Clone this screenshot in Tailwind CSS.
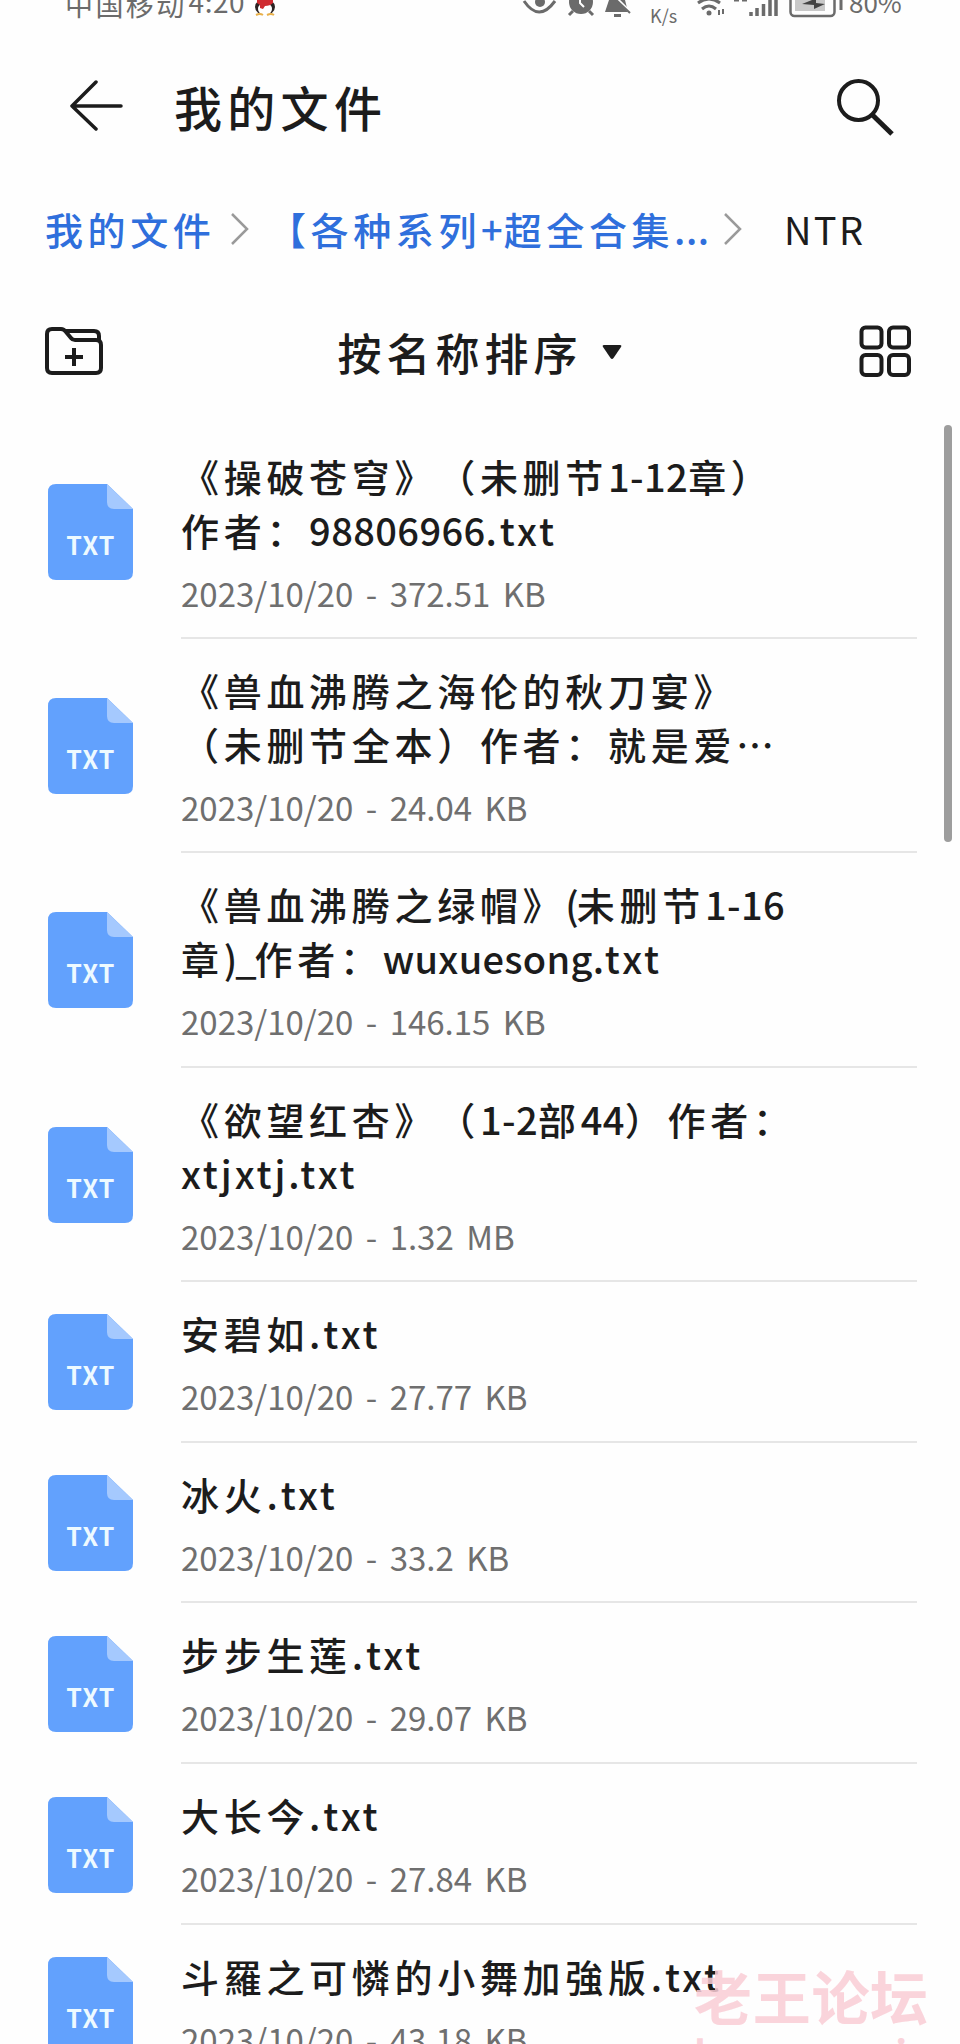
<!DOCTYPE html>
<html lang="zh-Hans">
<head>
  <meta charset="UTF-8">
  <meta name="viewport" content="width=device-width, initial-scale=1">
  <title>我的文件</title>
  <script src="https://cdn.jsdelivr.net/npm/@tailwindcss/browser@4"></script>
</head>
<body class="bg-[#fefefe] font-['Noto_Sans_CJK_SC',sans-serif] text-[#1c1c1c] [text-spacing-trim:space-all]">
  <div class="relative w-[960px] h-[2044px] overflow-hidden flex flex-col">

    <!-- status bar -->
    <div class="h-[30px] shrink-0 flex justify-between items-start pl-[65px] pr-[58px] text-[#6b6b6b]">
      <div class="flex items-start">
        <span class="text-[28px] leading-[30px] tracking-[2.4px] -mt-[11px]">中国移动</span>
        <span class="text-[28px] leading-[30px] tracking-[0.5px] -mt-[14px] ml-[2px]">4:20</span>
        <svg class="w-[24px] h-[17px] ml-[8px]" viewBox="0 0 24 17">
          <ellipse cx="12" cy="7" rx="10" ry="8" fill="#2b2323"/>
          <ellipse cx="12" cy="9" rx="7" ry="6.500" fill="#fff"/>
          <path d="M4 0h16v3q-3 3-8 3l-2 3-3-1V5L4 3z" fill="#cf2b30"/>
          <path d="M3 15q4-2 7 0M14 15q4-2 7 0" stroke="#e8b04a" stroke-width="2" fill="none"/>
        </svg>
      </div>
      <svg class="w-[377px] h-[26px] overflow-visible" viewBox="525 0 377 26" fill="none" stroke="#6b6b6b">
        <path d="M524 1q15 22 31 0" stroke-width="3"/>
        <circle cx="540" cy="2" r="5" fill="#6b6b6b" stroke="none"/>
        <circle cx="581" cy="2" r="12" fill="#6b6b6b" stroke="none"/>
        <path d="M573 11l-4 4M589 11l4 4" stroke-width="3"/>
        <path d="M580 -2v5l4 4" stroke="#fff" stroke-width="2"/>
        <path d="M609 0h16l3 12h-23z" fill="#6b6b6b" stroke="none"/>
        <path d="M614 15.500h7" stroke-width="3"/>
        <path d="M610 -8l20 20" stroke="#fff" stroke-width="3"/>
        <path d="M611 -5l19 18" stroke-width="2"/>
        <path d="M698 3q11-8 22 0M702 9q7-6 14 0" stroke-width="3"/>
        <circle cx="709" cy="13" r="2.500" fill="#6b6b6b" stroke="none"/>
        <path d="M719 10v5M723 9v5" stroke-width="2"/>
        <path d="M734 0h5M742 0h5" stroke-width="3"/>
        <path d="M751 12v4M757 8v8M763.500 4v12M770 0v16M776 0v16" stroke-width="3.500"/>
        <rect x="790.500" y="-14" width="44" height="30" rx="4" stroke-width="2.500"/>
        <path d="M795 0h30v11h-30z" fill="#c9c9c9" stroke="none"/>
        <path d="M802 4l10-4h4v3l9 1-11 5v-4z" fill="#444" stroke="none"/>
        <path d="M841 0v10" stroke-width="3"/>
        <text x="650" y="23" font-size="18" fill="#6b6b6b" stroke="none">K/s</text>
        <text x="849" y="13" font-size="26" fill="#6b6b6b" stroke="none">80%</text>
      </svg>
    </div>

    <!-- title bar -->
    <div class="h-[150px] shrink-0 flex items-center pl-[70px] pr-[66px]">
      <svg class="w-[54px] h-[52px]" viewBox="0 0 54 52" fill="none" stroke="#1c1c1c" stroke-width="3.500" stroke-linecap="round" stroke-linejoin="round">
        <path d="M26 3L2 27l24 23M2 27h49"/>
      </svg>
      <h1 class="text-[48px] leading-[60px] tracking-[5.3px] font-medium ml-[50px] mt-[2px]">我的文件</h1>
      <svg class="w-[58px] h-[58px] ml-auto mt-[4px]" viewBox="0 0 58 58" fill="none" stroke="#1c1c1c">
        <circle cx="22.500" cy="22.500" r="19.500" stroke-width="4"/>
        <path d="M36.500 37L56 56" stroke-width="5"/>
      </svg>
    </div>

    <!-- breadcrumb -->
    <div class="h-[100px] shrink-0 flex items-center pl-[45px] pb-[2px] text-[38px] leading-[50px] text-[#2f6fdc]">
      <span class="w-[186px] tracking-[4.6px] font-medium">我的文件</span>
      <svg class="w-[18px] h-[34px] shrink-0" viewBox="0 0 18 34" fill="none" stroke="#9a9a9a" stroke-width="2.500"><path d="M1 2l15 15L1 32"/></svg>
      <span class="w-[475px] pl-[19px] whitespace-nowrap tracking-[4.6px] font-medium">【各种系列<span class="tracking-[1px]">+</span>超全合集<span class="tracking-[0.5px]">...</span></span>
      <svg class="w-[18px] h-[34px] shrink-0" viewBox="0 0 18 34" fill="none" stroke="#9a9a9a" stroke-width="2.500"><path d="M1 2l15 15L1 32"/></svg>
      <span class="ml-[42px] tracking-[2.4px] text-[#1c1c1c]">NTR</span>
    </div>

    <!-- sort bar -->
    <div class="h-[145px] shrink-0 flex items-center justify-between pl-[45px] pr-[48px] pb-[3px]">
      <svg class="w-[58px] h-[50px]" viewBox="0 0 58 50" fill="none" stroke="#1c1c1c" stroke-width="4" stroke-linejoin="round">
        <path d="M7 3h9q3 0 5 3l5 6q1.500 2 4 2h21q5 0 5 5v23q0 5-5 5H7q-5 0-5-5V8q0-5 5-5z"/>
        <path d="M20 5h29q5 0 5 5v5"/>
        <path d="M29 22v18M20 31h18"/>
      </svg>
      <div class="flex items-center -ml-[3px] mt-[2px]">
        <span class="text-[44px] leading-[60px] tracking-[5px] font-medium">按名称排序</span>
        <svg class="w-[20px] h-[16px] ml-[19px]" viewBox="0 0 20 16"><path d="M2 1h16q2 0 1 2l-7.500 11q-1.500 2-3 0L1 3Q0 1 2 1z" fill="#1c1c1c"/></svg>
      </div>
      <svg class="w-[53px] h-[53px]" viewBox="0 0 53 53" fill="none" stroke="#1c1c1c" stroke-width="4">
        <rect x="2.500" y="2.500" width="20" height="20" rx="4"/>
        <rect x="30" y="2.500" width="20" height="20" rx="4"/>
        <rect x="2.500" y="30" width="20" height="20" rx="4"/>
        <rect x="30" y="30" width="20" height="20" rx="4"/>
      </svg>
    </div>

    <!-- file list -->
    <ul id="fileList"></ul>

    <!-- scrollbar -->
    <div class="absolute left-[944px] top-[425px] w-[8px] h-[417px] rounded-full bg-[#9d9d9d]"></div>

    <!-- watermark -->
    <div class="absolute left-[694px] top-[1960px] font-bold text-[#f9ccd5]/85">
      <p class="text-[58px] leading-[70px] tracking-[0.7px] whitespace-nowrap">老王论坛</p>
      <p class="text-[39px] leading-[46px] tracking-[0.5px] whitespace-nowrap">laowang.vip</p>
    </div>
  </div>

  <script>
    const files = [
      { name: ["《操破苍穹》（未删节1-12章）", "作者：98806966.txt"], size: "372.51 KB" },
      { name: ["《兽血沸腾之海伦的秋刀宴》", "（未删节全本）作者：就是爱⋯"], size: "24.04 KB" },
      { name: ["《兽血沸腾之绿帽》(未删节1-16", "章)_作者：wuxuesong.txt"], size: "146.15 KB" },
      { name: ["《欲望红杏》（1-2部44）作者：", "xtjxtj.txt"], size: "1.32 MB" },
      { name: ["安碧如.txt"], size: "27.77 KB" },
      { name: ["冰火.txt"], size: "33.2 KB" },
      { name: ["步步生莲.txt"], size: "29.07 KB" },
      { name: ["大长今.txt"], size: "27.84 KB" },
      { name: ["斗羅之可憐的小舞加強版.txt"], size: "43.18 KB" },
    ];

    const icon = `
      <svg class="w-[85px] h-[96px] shrink-0" viewBox="0 0 85 96">
        <path d="M8 0h51l26 25v63q0 8-8 8H8q-8 0-8-8V8Q0 0 8 0z" fill="#62a1fd"/>
        <path d="M59 0l26 25H66q-7 0-7-7z" fill="#a5c9fe"/>
        <text x="43" y="70.500" text-anchor="middle" font-size="25" font-weight="700" letter-spacing="1.200" fill="#eefaff">TXT</text>
      </svg>`;

    // Han characters are set wider apart than digits and letters
    function runs(line) {
      return line.replace(/\.txt|[0-9-]+|[_()]+|[a-z]+|[^0-9a-z._()-]+/g, (s) => {
        if (/[0-9]/.test(s)) return `<span class="tracking-[0.4px]">${s}</span>`;
        if (/[_()]/.test(s)) return `<span class="tracking-[-2px]">${s}</span>`;
        if (s === ".txt" || s === "xtjxtj") return `<span class="tracking-[2.9px]">${s}</span>`;
        if (/[a-z]/.test(s)) return `<span class="tracking-[0.3px]">${s}</span>`;
        return `<span class="tracking-[4.7px]">${s}</span>`;
      });
    }

    document.getElementById("fileList").innerHTML = files.map((f) => `
      <li class="${f.name.length > 1 ? "h-[214.2px]" : "h-[160.8px]"} flex items-center pl-[48px] pr-[43px]">
        ${icon}
        <div class="ml-[48px] h-full flex-1 border-b-2 border-[#e6e6e6] pt-[24px]">
          ${f.name.map((l) => `<p class="text-[38px] leading-[54px] font-medium whitespace-nowrap">${runs(l)}</p>`).join("")}
          <p class="mt-[11px] text-[33px] leading-[50px] text-[#6f6f6f] [word-spacing:5px]">2023/10/20 - ${f.size}</p>
        </div>
      </li>`).join("");
  </script>
</body>
</html>
